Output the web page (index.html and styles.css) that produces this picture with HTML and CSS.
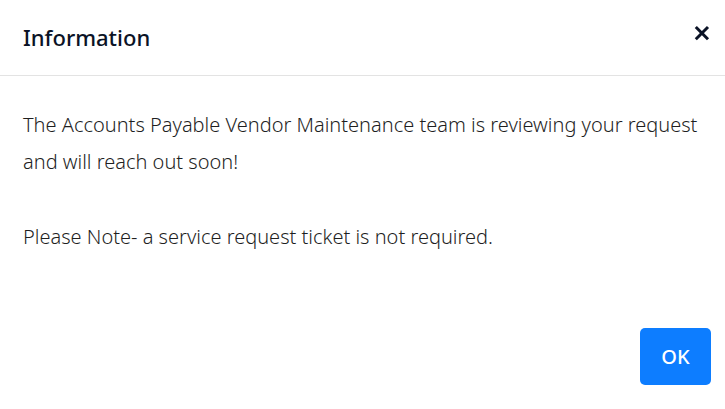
FILE: index.html
```html
<!DOCTYPE html>
<html lang="en">
<head>
<meta charset="utf-8">
<title>Information</title>
<link rel="stylesheet" href="styles.css">
</head>
<body>
<section class="dialog" role="dialog" aria-labelledby="dialog-title">
  <header class="dialog-header">
    <h1 class="dialog-title" id="dialog-title">Information</h1>
    <button class="close" type="button" aria-label="Close">
      <svg class="close-icon" viewBox="0 0 16 16" aria-hidden="true"><path d="M1.8 2 14 14.2M14 2 1.8 14.2"/></svg>
    </button>
  </header>
  <div class="dialog-body">
    <p>The Accounts Payable Vendor Maintenance team is reviewing your request and will reach out soon!</p>
    <p>Please Note- a service request ticket is not required.</p>
  </div>
  <footer class="dialog-footer">
    <button class="ok" type="button">OK</button>
  </footer>
</section>
</body>
</html>
```
FILE: styles.css
```css
* {
  box-sizing: border-box;
}

body {
  margin: 0;
  background: #fff;
  color: #1f1f1f;
  font-family: "Noto Sans", "Open Sans", sans-serif;
}

.dialog {
  display: flex;
  flex-direction: column;
  min-height: 100vh;
}

.dialog-header {
  display: flex;
  justify-content: space-between;
  align-items: flex-start;
  padding: 19px 15px 20px 23px;
  border-bottom: 1px solid #e3e3e3;
}

.dialog-title {
  margin: 0;
  color: #0b1326;
  font-size: 22px;
  font-weight: 500;
  line-height: 36px;
}

.close {
  display: flex;
  margin: 6px 0 0;
  padding: 0;
  border: 0;
  background: none;
  color: #0b1326;
  cursor: pointer;
}

.close-icon {
  width: 16px;
  height: 16px;
  fill: none;
  stroke: currentColor;
  stroke-width: 3;
}

.dialog-body {
  flex: 1;
  padding: 30px 23px;
  font-size: 20px;
  font-weight: 300;
  line-height: 37px;
}

.dialog-body p {
  margin: 0 0 38px;
}

.dialog-body p:last-child {
  margin: 0;
}

.dialog-footer {
  display: flex;
  justify-content: flex-end;
  padding: 0 14px 24px;
}

.ok {
  min-width: 71px;
  padding: 10px 20px;
  border: 0;
  border-radius: 5px;
  background: #0d7dff;
  color: #fff;
  font: 500 20px/37px "Noto Sans", "Open Sans", sans-serif;
  cursor: pointer;
}
```
